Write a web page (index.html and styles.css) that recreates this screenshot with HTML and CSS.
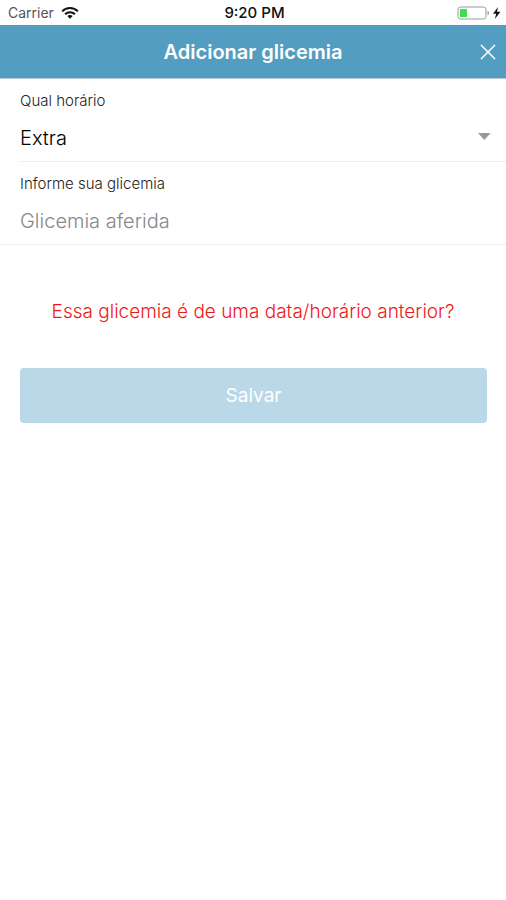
FILE: index.html
```html
<!DOCTYPE html>
<html lang="pt-BR">
<head>
    <meta charset="UTF-8" />
    <meta name="viewport" content="width=device-width, initial-scale=1.0" />
    <title>Adicionar glicemia</title>
    <link rel="stylesheet" href="styles.css">
</head>
<body>
    <div class="status-bar">
        <div class="carrier">
            <span>Carrier</span>
            <svg width="18" height="12" viewBox="0 0 18 12" fill="none" stroke="#111" stroke-width="2">
                <path d="M1.2 4.4 C5.4 0 12.6 0 16.8 4.4" />
                <path d="M4.1 7.3 C6.8 4.5 11.2 4.5 13.9 7.3" />
                <path d="M6.3 9 C7.9 7.6 10.1 7.6 11.7 9 L9 11.8 Z" fill="#111" stroke="none" />
            </svg>
        </div>
        <div class="time">9:20 PM</div>
        <div class="battery">
            <svg width="44" height="14" viewBox="0 0 44 14">
                <rect x="1" y="1" width="28" height="12" rx="2.5" fill="#fff" stroke="#999" />
                <rect x="3" y="3" width="7" height="8" fill="#3fdc55" />
                <path d="M30.5 5 C32.5 5.5 32.5 8.5 30.5 9 Z" fill="#999" />
                <path d="M41 1 L36 7.8 H39.2 L37.8 13 L43.5 5.8 H40 Z" fill="#111" />
            </svg>
        </div>
    </div>

    <header class="navbar">
        <h1>Adicionar glicemia</h1>
        <button type="button" class="close" aria-label="Fechar">
            <svg width="16" height="16" viewBox="0 0 16 16" stroke="#fff" stroke-width="1.5">
                <path d="M1 1 L15 15 M15 1 L1 15" />
            </svg>
        </button>
    </header>

    <form class="form">
        <div class="field field-inset">
            <label for="horario">Qual horário</label>
            <div class="select-wrap">
                <select id="horario">
                    <option selected>Extra</option>
                </select>
                <svg width="13" height="7" viewBox="0 0 13 7">
                    <path d="M0 0 H13 L6.5 7 Z" fill="#999" />
                </svg>
            </div>
        </div>
        <div class="field">
            <label for="glicemia">Informe sua glicemia</label>
            <input type="text" id="glicemia" inputmode="numeric" placeholder="Glicemia aferida" />
        </div>
        <a href="#" class="other-date">Essa glicemia é de uma data/horário anterior?</a>
        <button type="button" class="save">Salvar</button>
    </form>
</body>
</html>
```
FILE: styles.css
```css
* {
    box-sizing: border-box;
}
body {
    margin: 0;
    background-color: #fff;
    color: #111;
    font-family: Inter, Roboto, sans-serif;
}

/* Status bar */
.status-bar {
    display: grid;
    grid-template-columns: 1fr auto 1fr;
    align-items: center;
    height: 25px;
    padding: 0 5px 0 8px;
    font-size: 14px;
}
.carrier {
    display: flex;
    align-items: center;
    gap: 7px;
    color: #555;
}
.time {
    font-size: 15px;
    font-weight: 500;
}
.battery {
    display: flex;
    justify-content: flex-end;
}

/* Title bar */
.navbar {
    display: grid;
    grid-template-columns: 1fr auto 1fr;
    align-items: center;
    height: 54px;
    padding: 0 10px;
    background-color: #529dc0;
    border-bottom: 1px solid #b9cdd8;
    color: #fff;
}
.navbar h1 {
    grid-column: 2;
    margin: 0;
    font-size: 20px;
    font-weight: 600;
}
.close {
    display: flex;
    justify-self: end;
    padding: 0;
    border: none;
    background: none;
    cursor: pointer;
}

/* Form */
.form {
    display: flex;
    flex-direction: column;
    font-weight: 300;
}
.field {
    padding: 12px 0 7px 20px;
    border-bottom: 1px solid #eee;
}
.field-inset {
    margin-left: 20px;
    padding-left: 0;
}
.field label {
    display: block;
    margin-bottom: 11px;
    font-size: 15px;
    line-height: 20px;
    color: #222;
}
.field select,
.field input {
    display: block;
    width: 100%;
    height: 32px;
    padding: 0;
    border: none;
    outline: none;
    background: none;
    color: #000;
    font-family: inherit;
    font-size: 20px;
    font-weight: inherit;
    appearance: none;
}
.field input::placeholder {
    color: #888;
    opacity: 1;
}
.select-wrap {
    display: flex;
    align-items: center;
    padding-right: 15px;
}
.select-wrap svg {
    margin-bottom: 4px;
}
.other-date {
    margin: 54px 20px 0;
    font-size: 19px;
    line-height: 26px;
    color: #f01818;
    text-align: center;
    text-decoration: none;
}
.save {
    height: 55px;
    margin: 43px 19px 0 20px;
    border: none;
    border-radius: 4px;
    background-color: #bad8e8;
    color: #fff;
    font-family: inherit;
    font-size: 19px;
    cursor: pointer;
}
```
